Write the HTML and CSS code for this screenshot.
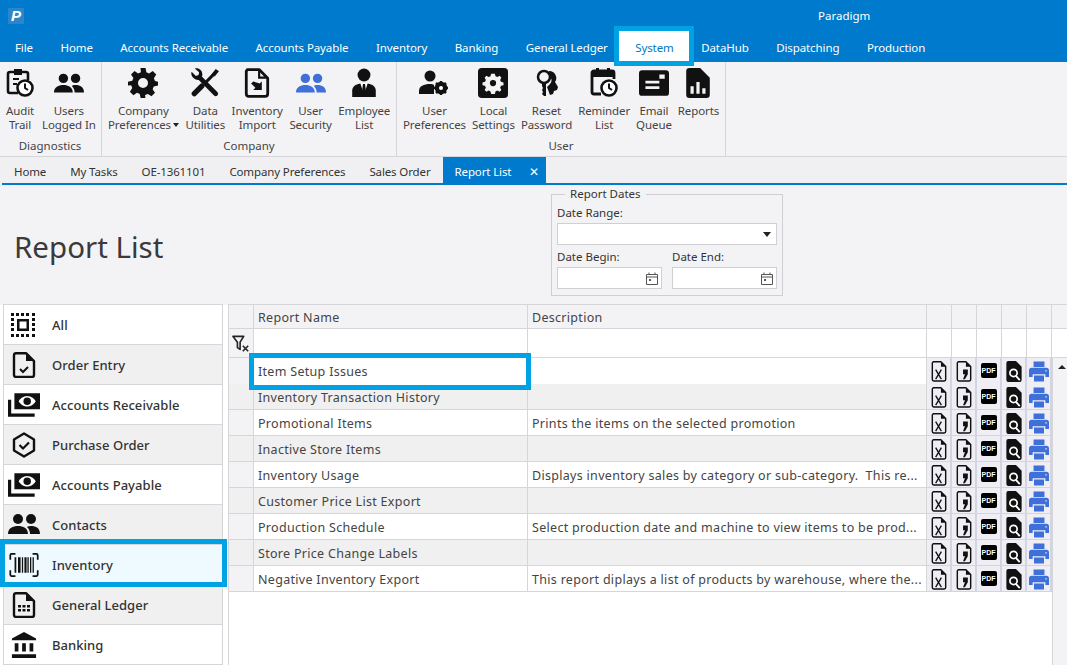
FILE: index.html
```html
<!DOCTYPE html>
<html lang="en">
<head>
    <meta charset="UTF-8">
    <title>Paradigm - Report List</title>
    <link rel="stylesheet" href="styles.css">
</head>
<body>
    <svg class="icon-defs">
        <symbol id="i-people" viewBox="0 0 32 24">
            <circle cx="10" cy="6" r="5"/><circle cx="23" cy="6" r="5"/>
            <path d="M0 21c0-6 5-8 10-8s10 2 10 8zM22 21c0-3-1-5-3-7 1-1 3-1 4-1 5 0 9 2 9 8z"/>
        </symbol>
        <symbol id="i-audit" viewBox="0 0 28 30">
            <path fill="none" stroke="currentColor" stroke-width="2.600" d="M12 25H4a2 2 0 0 1-2-2V6a2 2 0 0 1 2-2h16a2 2 0 0 1 2 2v6"/>
            <path d="M8 1h8v6H8zM7 10h6v2H7zM7 15h4v2H7z"/>
            <circle cx="19" cy="20" r="7.500" fill="#fff" stroke="currentColor" stroke-width="2.600"/>
            <path fill="none" stroke="currentColor" stroke-width="2" d="M19 15.500V20l3 2"/>
        </symbol>
        <symbol id="i-gear" viewBox="0 0 24 24">
            <path fill-rule="evenodd" d="M10 0h4l.7 3.400 2.200.9L19.800 2.400l2.800 2.800-1.900 2.900.9 2.200L24 11v3l-3.400.7-.9 2.200 1.900 2.900-2.800 2.800-2.900-1.900-2.200.9L13.900 24h-3.800l-.7-3.300-2.200-.9-2.900 1.900-2.800-2.800 1.900-2.900-.9-2.200L0 14v-3l3.400-.9.900-2.200-1.900-2.700 2.800-2.800 2.900 1.900 2.200-.9zM12 8a4 4 0 1 0 0 8 4 4 0 0 0 0-8z"/>
        </symbol>
        <symbol id="i-tools" viewBox="0 0 28 28">
            <path d="M1.500 3.500l4 4 2.500-1 .5-2.500-4-3.500C8-.5 12 2 11.500 7L9 11C5 12 0 8 1.500 3.500z"/>
            <path stroke="currentColor" stroke-width="4.400" stroke-linecap="round" d="M9 9l15 15"/>
            <path stroke="currentColor" stroke-width="2.800" d="M23 5L13 15"/>
            <path stroke="currentColor" stroke-width="5" stroke-linecap="round" d="M11 17l-7 7"/>
            <path d="M20 6l4-5 3 2-4 5z"/>
        </symbol>
        <symbol id="i-import" viewBox="0 0 24 28">
            <path fill="none" stroke="currentColor" stroke-width="2.600" stroke-linejoin="round" d="M3 1.500h11l8 8V24a2.500 2.500 0 0 1-2.500 2.500h-15A2.500 2.500 0 0 1 2 24V3z"/>
            <path fill="none" stroke="currentColor" stroke-width="2" d="M14 2v7h7"/>
            <path d="M8.500 12.500l-2 2 4 4-2 2h8v-8l-2 2z"/>
        </symbol>
        <symbol id="i-employee" viewBox="0 0 24 28">
            <circle cx="12" cy="6.500" r="6"/>
            <path d="M1 27v-6c0-4 4-6 8-6.500h6c4 .5 8 2.500 8 6.500v6z"/>
            <path fill="#fff" d="M8.500 14L12 25l3.500-11z"/>
            <path d="M11 15h2l1 8-2 3-2-3z"/>
        </symbol>
        <symbol id="i-user-pref" viewBox="0 0 30 26">
            <circle cx="11" cy="6" r="5.500"/>
            <path d="M0 24v-3c0-5 5-7 11-7 2 0 3 0 4 1v9z"/>
            <circle cx="22" cy="18" r="4.500" fill="none" stroke="currentColor" stroke-width="3.500"/>
            <path stroke="currentColor" stroke-width="2.500" d="M22 11v14M15 18h14M17 13l10 10M27 13L17 23"/>
            <circle cx="22" cy="18" r="2" fill="#fff"/>
        </symbol>
        <symbol id="i-local" viewBox="0 0 24 24">
            <path fill-rule="evenodd" d="M3 0h18a3 3 0 0 1 3 3v18a3 3 0 0 1-3 3H3a3 3 0 0 1-3-3V3a3 3 0 0 1 3-3zM10.500 4.500l-.5 2-1.500.7-1.800-1-1.400 1.500 1 1.800-.7 1.500-2 .5v2.200l2 .5.700 1.500-1 1.800 1.400 1.500 1.800-1 1.500.7.500 2h3l.5-2 1.500-.7 1.800 1 1.400-1.500-1-1.800.7-1.500 2-.5v-2.200l-2-.5-.7-1.500 1-1.800-1.400-1.500-1.800 1-1.500-.7-.5-2zM12 9.500a2.500 2.500 0 1 1 0 5 2.500 2.500 0 0 1 0-5z"/>
        </symbol>
        <symbol id="i-keys" viewBox="0 0 24 30">
            <circle cx="9" cy="9" r="6" fill="none" stroke="currentColor" stroke-width="2.500"/>
            <path d="M7 14h4v14H9l-2-2 1-2-1-2 1-2-1-2z"/>
            <path d="M14 3a7 7 0 0 1 6 11l3 5-1 3-3 1-1 3-3 1-3-8 3-3a5 5 0 0 0-1-8z"/>
        </symbol>
        <symbol id="i-reminder" viewBox="0 0 28 30">
            <path d="M6 0h3v4H6zM17 0h3v4h-3z"/>
            <path fill="none" stroke="currentColor" stroke-width="2.800" d="M11 26H4a2 2 0 0 1-2-2V5a2 2 0 0 1 2-2h18a2 2 0 0 1 2 2v6"/>
            <path d="M2 3h22v6H2z"/>
            <circle cx="19" cy="20" r="7.500" fill="#fff" stroke="currentColor" stroke-width="2.600"/>
            <path fill="none" stroke="currentColor" stroke-width="2" d="M19 15.500V20l3 2"/>
        </symbol>
        <symbol id="i-queue" viewBox="0 0 28 24">
            <path fill-rule="evenodd" d="M3 0h22a3 3 0 0 1 3 3v18a3 3 0 0 1-3 3H3a3 3 0 0 1-3-3V3a3 3 0 0 1 3-3zM19 4v4h5V4zM6 10v2.500h13V10zM6 15v2.500h13V15z"/>
        </symbol>
        <symbol id="i-reports" viewBox="0 0 22 28">
            <path fill-rule="evenodd" d="M3 0h10l9 9v16a3 3 0 0 1-3 3H3a3 3 0 0 1-3-3V3a3 3 0 0 1 3-3zM4 17v7h3v-7zM9.500 13v11h3V13zM15 19v5h3v-5z"/>
        </symbol>
        <symbol id="i-all" viewBox="0 0 24 24">
            <path fill-rule="evenodd" d="M6 6h12v12H6zM8.500 8.500v7h7v-7z"/>
            <path d="M0 0h3v3H0zM5 0h3v3H5zM10 0h3v3h-3zM15 0h3v3h-3zM21 0h3v3h-3zM0 5h3v3H0zM21 5h3v3h-3zM0 10h3v3H0zM21 10h3v3h-3zM0 15h3v3H0zM21 15h3v3h-3zM0 21h3v3H0zM5 21h3v3H5zM10 21h3v3h-3zM15 21h3v3h-3zM21 21h3v3h-3z"/>
        </symbol>
        <symbol id="i-order" viewBox="0 0 22 26">
            <path fill="none" stroke="currentColor" stroke-width="2.400" stroke-linejoin="round" d="M3 1.200h10l8 8V23a2 2 0 0 1-2 2H3a2 2 0 0 1-2-2V3a2 2 0 0 1 2-1.800z"/>
            <path d="M13 1v8h8z"/>
            <path fill="none" stroke="currentColor" stroke-width="2" d="M7 17l3 3 5-5"/>
        </symbol>
        <symbol id="i-money" viewBox="0 0 30 22">
            <path fill-rule="evenodd" d="M6 0h24v15H6zM18 2.500c-4 0-7 3-8 5 1 2 4 5 8 5s7-3 8-5c-1-2-4-5-8-5z"/>
            <circle cx="18" cy="7.500" r="3.500"/>
            <path d="M0 6h3v13h22v3H0z"/>
        </symbol>
        <symbol id="i-po" viewBox="0 0 24 26">
            <path fill="none" stroke="currentColor" stroke-width="2.400" stroke-linejoin="round" d="M12 1.500l10 6v11l-10 6-10-6v-11z"/>
            <path fill="none" stroke="currentColor" stroke-width="2.200" d="M7.500 13l3.500 3.500 6-6"/>
        </symbol>
        <symbol id="i-barcode" viewBox="0 0 34 28">
            <path fill="none" stroke="currentColor" stroke-width="2" d="M1 8V2.500A1.500 1.500 0 0 1 2.500 1H7M27 1h4.500A1.500 1.500 0 0 1 33 2.500V8M1 20v5.500A1.500 1.500 0 0 0 2.500 27H7M27 27h4.500a1.500 1.500 0 0 0 1.500-1.500V20"/>
            <path d="M6 5h2v18H6zM10 5h3v18h-3zM14.500 5h1.500v18h-1.500zM17.500 5h2.500v18h-2.500zM21 5h1.500v18H21zM24 5h1.500v18H24zM27 5h1.500v18H27z"/>
        </symbol>
        <symbol id="i-ledger" viewBox="0 0 22 26">
            <path fill="none" stroke="currentColor" stroke-width="2.400" stroke-linejoin="round" d="M3 1.200h10l8 8V23a2 2 0 0 1-2 2H3a2 2 0 0 1-2-2V3a2 2 0 0 1 2-1.800z"/>
            <path d="M13 1v8h8zM5 13h3v2.500H5zM9.500 13h3v2.500h-3zM14 13h3v2.500h-3zM5 17h3v2.500H5zM9.500 17h3v2.500h-3zM14 17h3v2.500h-3z"/>
        </symbol>
        <symbol id="i-bank" viewBox="0 0 26 28">
            <path d="M13 0l13 7v2H0V7zM3 12h4v9H3zM11 12h4v9h-4zM19 12h4v9h-4zM0 24h26v4H0z"/>
        </symbol>
        <symbol id="i-xls" viewBox="0 0 16 22">
            <path fill="none" stroke="currentColor" stroke-width="1.500" stroke-linejoin="round" d="M2 .8h8l5 5V19.500a1.500 1.500 0 0 1-1.500 1.500h-11A1.500 1.500 0 0 1 1 19.500V2z"/>
            <path d="M10 1v5h5z"/>
            <path stroke="currentColor" stroke-width="1.400" d="M4.500 9l6 10M10.500 9l-6 10"/>
        </symbol>
        <symbol id="i-word" viewBox="0 0 16 22">
            <path fill="none" stroke="currentColor" stroke-width="1.500" stroke-linejoin="round" d="M2 .8h8l5 5V19.500a1.500 1.500 0 0 1-1.500 1.500h-11A1.500 1.500 0 0 1 1 19.500V2z"/>
            <path d="M10 1v5h5zM7 9h5v5l-3 5H7l2-5H7z"/>
        </symbol>
        <symbol id="i-magnify" viewBox="0 0 16 22">
            <path d="M2 0h8l6 6v14a2 2 0 0 1-2 2H2a2 2 0 0 1-2-2V2a2 2 0 0 1 2-2z"/>
            <circle cx="7.500" cy="12.500" r="3.800" fill="none" stroke="#fff" stroke-width="1.800"/>
            <path stroke="#fff" stroke-width="2" d="M10 15.500l4 4.500"/>
        </symbol>
        <symbol id="i-print" viewBox="0 0 22 22">
            <path fill-rule="evenodd" d="M5 0h12v6H5zM3 7h16a3 3 0 0 1 3 3v7h-4v-3H4v3H0v-7a3 3 0 0 1 3-3zM5.500 15.500h11V22h-11zM18 9.500v1.500h1.500V9.500z"/>
        </symbol>
        <symbol id="i-calendar" viewBox="0 0 12 13">
            <path fill="none" stroke="currentColor" d="M.5 2.500h11v10H.5zM.5 5h11M3 .500v2M9 .500v2"/>
            <path d="M3 7h2v2H3z"/>
        </symbol>
        <symbol id="i-filter" viewBox="0 0 20 20">
            <path fill="none" stroke="currentColor" stroke-width="1.800" stroke-linejoin="round" d="M1 1.500h12L9 8v8l-3-2V8z"/>
            <path stroke="currentColor" stroke-width="1.800" d="M12 12l6 6M18 12l-6 6"/>
        </symbol>
    </svg>

    <header class="app-bar">
        <div class="title-bar">
            <span class="app-logo">P</span>
            <span class="app-name">Paradigm</span>
        </div>
        <nav class="menu">
            <a>File</a>
            <a>Home</a>
            <a>Accounts Receivable</a>
            <a>Accounts Payable</a>
            <a>Inventory</a>
            <a>Banking</a>
            <a>General Ledger</a>
            <a class="menu__active">System</a>
            <a>DataHub</a>
            <a>Dispatching</a>
            <a>Production</a>
        </nav>
    </header>

    <section class="ribbon">
        <div class="ribbon-group ribbon-group--diag">
            <div class="ribbon-group__items">
                <div class="ribbon-btn"><svg class="ribbon-icon"><use href="#i-audit"></use></svg><span>Audit<br>Trail</span></div>
                <div class="ribbon-btn"><svg class="ribbon-icon ribbon-icon--wide"><use href="#i-people"></use></svg><span>Users<br>Logged In</span></div>
            </div>
            <div class="ribbon-group__name">Diagnostics</div>
        </div>
        <div class="ribbon-group ribbon-group--company">
            <div class="ribbon-group__items">
                <div class="ribbon-btn"><svg class="ribbon-icon"><use href="#i-gear"></use></svg><span>Company<br>Preferences<i class="caret"></i></span></div>
                <div class="ribbon-btn"><svg class="ribbon-icon"><use href="#i-tools"></use></svg><span>Data<br>Utilities</span></div>
                <div class="ribbon-btn"><svg class="ribbon-icon"><use href="#i-import"></use></svg><span>Inventory<br>Import</span></div>
                <div class="ribbon-btn ribbon-btn--blue"><svg class="ribbon-icon ribbon-icon--wide"><use href="#i-people"></use></svg><span>User<br>Security</span></div>
                <div class="ribbon-btn"><svg class="ribbon-icon"><use href="#i-employee"></use></svg><span>Employee<br>List</span></div>
            </div>
            <div class="ribbon-group__name">Company</div>
        </div>
        <div class="ribbon-group ribbon-group--user">
            <div class="ribbon-group__items">
                <div class="ribbon-btn"><svg class="ribbon-icon"><use href="#i-user-pref"></use></svg><span>User<br>Preferences</span></div>
                <div class="ribbon-btn"><svg class="ribbon-icon"><use href="#i-local"></use></svg><span>Local<br>Settings</span></div>
                <div class="ribbon-btn"><svg class="ribbon-icon"><use href="#i-keys"></use></svg><span>Reset<br>Password</span></div>
                <div class="ribbon-btn"><svg class="ribbon-icon"><use href="#i-reminder"></use></svg><span>Reminder<br>List</span></div>
                <div class="ribbon-btn"><svg class="ribbon-icon"><use href="#i-queue"></use></svg><span>Email<br>Queue</span></div>
                <div class="ribbon-btn"><svg class="ribbon-icon"><use href="#i-reports"></use></svg><span>Reports</span></div>
            </div>
            <div class="ribbon-group__name">User</div>
        </div>
    </section>

    <nav class="doc-tabs">
        <a>Home</a>
        <a>My Tasks</a>
        <a>OE-1361101</a>
        <a>Company Preferences</a>
        <a>Sales Order</a>
        <a class="doc-tabs__active">Report List <span class="doc-tabs__close">✕</span></a>
    </nav>

    <section class="page-head">
        <h1 class="page-title">Report List</h1>
        <fieldset class="report-dates">
            <legend>Report Dates</legend>
            <label class="field-label">Date Range:</label>
            <div class="field-box field-box--select"><i class="caret caret--big"></i></div>
            <div class="date-row">
                <div class="date-field">
                    <label class="field-label">Date Begin:</label>
                    <div class="field-box"><svg class="cal-icon"><use href="#i-calendar"></use></svg></div>
                </div>
                <div class="date-field">
                    <label class="field-label">Date End:</label>
                    <div class="field-box"><svg class="cal-icon"><use href="#i-calendar"></use></svg></div>
                </div>
            </div>
        </fieldset>
    </section>

    <main class="content">
        <ul class="module-list">
            <li class="module"><svg class="module-icon module-icon--all"><use href="#i-all"></use></svg>All</li>
            <li class="module module--alt"><svg class="module-icon module-icon--doc"><use href="#i-order"></use></svg>Order Entry</li>
            <li class="module"><svg class="module-icon module-icon--money"><use href="#i-money"></use></svg>Accounts Receivable</li>
            <li class="module module--alt"><svg class="module-icon module-icon--po"><use href="#i-po"></use></svg>Purchase Order</li>
            <li class="module"><svg class="module-icon module-icon--money"><use href="#i-money"></use></svg>Accounts Payable</li>
            <li class="module module--alt"><svg class="module-icon module-icon--money"><use href="#i-people"></use></svg>Contacts</li>
            <li class="module module--active"><svg class="module-icon module-icon--money"><use href="#i-barcode"></use></svg>Inventory</li>
            <li class="module module--alt"><svg class="module-icon module-icon--doc"><use href="#i-ledger"></use></svg>General Ledger</li>
            <li class="module"><svg class="module-icon module-icon--po"><use href="#i-bank"></use></svg>Banking</li>
        </ul>

        <div class="report-grid">
            <div class="grid-row grid-row--head">
                <div class="cell"></div><div class="cell">Report Name</div><div class="cell">Description</div>
                <div class="cell"></div><div class="cell"></div><div class="cell"></div><div class="cell"></div><div class="cell"></div><div class="cell cell--end"></div>
            </div>
            <div class="grid-row grid-row--filter">
                <div class="cell cell--clear"><svg class="filter-icon"><use href="#i-filter"></use></svg></div><div class="cell"></div><div class="cell"></div>
                <div class="cell"></div><div class="cell"></div><div class="cell"></div><div class="cell"></div><div class="cell"></div><div class="cell cell--end"></div>
            </div>
            <div class="grid-row"><div class="cell cell--ind"></div><div class="cell cell--picked">Item Setup Issues</div><div class="cell"></div>
                <div class="cell cell--act"><svg><use href="#i-xls"></use></svg></div><div class="cell cell--act"><svg><use href="#i-word"></use></svg></div><div class="cell cell--act"><span class="pdf">PDF</span></div><div class="cell cell--act"><svg><use href="#i-magnify"></use></svg></div><div class="cell cell--act cell--print"><svg><use href="#i-print"></use></svg></div></div>
            <div class="grid-row grid-row--alt"><div class="cell cell--ind"></div><div class="cell">Inventory Transaction History</div><div class="cell"></div>
                <div class="cell cell--act"><svg><use href="#i-xls"></use></svg></div><div class="cell cell--act"><svg><use href="#i-word"></use></svg></div><div class="cell cell--act"><span class="pdf">PDF</span></div><div class="cell cell--act"><svg><use href="#i-magnify"></use></svg></div><div class="cell cell--act cell--print"><svg><use href="#i-print"></use></svg></div></div>
            <div class="grid-row"><div class="cell cell--ind"></div><div class="cell">Promotional Items</div><div class="cell">Prints the items on the selected promotion</div>
                <div class="cell cell--act"><svg><use href="#i-xls"></use></svg></div><div class="cell cell--act"><svg><use href="#i-word"></use></svg></div><div class="cell cell--act"><span class="pdf">PDF</span></div><div class="cell cell--act"><svg><use href="#i-magnify"></use></svg></div><div class="cell cell--act cell--print"><svg><use href="#i-print"></use></svg></div></div>
            <div class="grid-row grid-row--alt"><div class="cell cell--ind"></div><div class="cell">Inactive Store Items</div><div class="cell"></div>
                <div class="cell cell--act"><svg><use href="#i-xls"></use></svg></div><div class="cell cell--act"><svg><use href="#i-word"></use></svg></div><div class="cell cell--act"><span class="pdf">PDF</span></div><div class="cell cell--act"><svg><use href="#i-magnify"></use></svg></div><div class="cell cell--act cell--print"><svg><use href="#i-print"></use></svg></div></div>
            <div class="grid-row"><div class="cell cell--ind"></div><div class="cell">Inventory Usage</div><div class="cell">Displays inventory sales by category or sub-category.  This re...</div>
                <div class="cell cell--act"><svg><use href="#i-xls"></use></svg></div><div class="cell cell--act"><svg><use href="#i-word"></use></svg></div><div class="cell cell--act"><span class="pdf">PDF</span></div><div class="cell cell--act"><svg><use href="#i-magnify"></use></svg></div><div class="cell cell--act cell--print"><svg><use href="#i-print"></use></svg></div></div>
            <div class="grid-row grid-row--alt"><div class="cell cell--ind"></div><div class="cell">Customer Price List Export</div><div class="cell"></div>
                <div class="cell cell--act"><svg><use href="#i-xls"></use></svg></div><div class="cell cell--act"><svg><use href="#i-word"></use></svg></div><div class="cell cell--act"><span class="pdf">PDF</span></div><div class="cell cell--act"><svg><use href="#i-magnify"></use></svg></div><div class="cell cell--act cell--print"><svg><use href="#i-print"></use></svg></div></div>
            <div class="grid-row"><div class="cell cell--ind"></div><div class="cell">Production Schedule</div><div class="cell">Select production date and machine to view items to be prod...</div>
                <div class="cell cell--act"><svg><use href="#i-xls"></use></svg></div><div class="cell cell--act"><svg><use href="#i-word"></use></svg></div><div class="cell cell--act"><span class="pdf">PDF</span></div><div class="cell cell--act"><svg><use href="#i-magnify"></use></svg></div><div class="cell cell--act cell--print"><svg><use href="#i-print"></use></svg></div></div>
            <div class="grid-row grid-row--alt"><div class="cell cell--ind"></div><div class="cell">Store Price Change Labels</div><div class="cell"></div>
                <div class="cell cell--act"><svg><use href="#i-xls"></use></svg></div><div class="cell cell--act"><svg><use href="#i-word"></use></svg></div><div class="cell cell--act"><span class="pdf">PDF</span></div><div class="cell cell--act"><svg><use href="#i-magnify"></use></svg></div><div class="cell cell--act cell--print"><svg><use href="#i-print"></use></svg></div></div>
            <div class="grid-row"><div class="cell cell--ind"></div><div class="cell">Negative Inventory Export</div><div class="cell">This report diplays a list of products by warehouse, where the...</div>
                <div class="cell cell--act"><svg><use href="#i-xls"></use></svg></div><div class="cell cell--act"><svg><use href="#i-word"></use></svg></div><div class="cell cell--act"><span class="pdf">PDF</span></div><div class="cell cell--act"><svg><use href="#i-magnify"></use></svg></div><div class="cell cell--act cell--print"><svg><use href="#i-print"></use></svg></div></div>
            <div class="scroll-col"><i class="scroll-up"></i></div>
        </div>
    </main>
</body>
</html>
```

FILE: styles.css
```css
* {
    box-sizing: border-box;
}

html, body {
    height: 665px;
    overflow: hidden;
}

body {
    margin: 0;
    background: #f3f3f6;
    color: #333;
    font-family: "Noto Sans", Arial, sans-serif;
    font-size: 12px;
    position: relative;
}

.icon-defs {
    display: none;
}

/* top blue bar */
.app-bar {
    background: #007acc;
    color: #fff;
    height: 62px;
}

.title-bar {
    height: 32px;
    position: relative;
}

.app-logo {
    position: absolute;
    left: 8px;
    top: 8px;
    width: 16px;
    height: 16px;
    background: #2b86c9;
    font: italic bold 15px/16px "Liberation Sans", sans-serif;
    text-align: center;
}

.app-name {
    position: absolute;
    left: 818px;
    top: 8px;
    font-size: 11.500px;
}

.menu {
    display: flex;
    gap: 27.500px;
    padding-left: 15px;
    height: 30px;
    line-height: 31px;
    font-size: 11.500px;
    letter-spacing: -.1px;
    position: relative;
}

.menu__active {
    background: #fff;
    color: #0078c8;
    position: relative;
    z-index: 1;
}

.menu__active::before {
    content: "";
    position: absolute;
    left: -21px;
    right: -20px;
    top: -6px;
    bottom: -4px;
    border: 5px solid #00a2e4;
    background: #fff;
    z-index: -1;
}

/* ribbon */
.ribbon {
    display: flex;
    height: 95px;
    background: #f3f3f6;
    border-bottom: 1px solid #d6d6da;
}

.ribbon-group {
    display: flex;
    flex-direction: column;
    border-right: 1px solid #d6d6da;
    height: 94px;
}

.ribbon-group--diag {
    width: 102px;
    padding-left: 5px;
}

.ribbon-group--company {
    width: 295px;
    padding-left: 6px;
}

.ribbon-group--user {
    width: 329px;
    padding-left: 6px;
}

.ribbon-group__items {
    display: flex;
    gap: 6px;
    height: 76px;
}

.ribbon-group--company .ribbon-group__items {
    gap: 6.500px;
}

.ribbon-group--diag .ribbon-group__items {
    gap: 7px;
}

.ribbon-group__name {
    text-align: center;
    line-height: 16px;
    font-size: 11.500px;
    color: #444;
    margin-left: -6px;
}

.ribbon-btn {
    display: flex;
    flex-direction: column;
    align-items: center;
    text-align: center;
    font-size: 11.500px;
    line-height: 14px;
    letter-spacing: -.1px;
    padding-top: 6px;
    white-space: nowrap;
    color: #111;
}

.ribbon-btn span {
    color: #444;
}

.ribbon-btn--blue {
    color: #3f6fd8;
}

.ribbon-icon {
    width: 30px;
    height: 30px;
    margin-bottom: 6px;
    fill: currentColor;
}

.ribbon-icon--wide {
    padding-top: 2px;
}

.caret {
    display: inline-block;
    border: 3.500px solid transparent;
    border-top: 4px solid #222;
    border-bottom: 0;
    margin-left: 2px;
    vertical-align: 2px;
}

/* document tabs */
.doc-tabs {
    display: flex;
    height: 26px;
    padding-left: 2px;
    line-height: 30px;
    font-size: 11.500px;
    letter-spacing: -.13px;
    background: #f0f0f2;
}

.doc-tabs a {
    padding: 0 12px;
}

.doc-tabs .doc-tabs__active {
    background: #007acc;
    color: #fff;
    width: 103px;
    position: relative;
}

.doc-tabs__close {
    position: absolute;
    right: 7px;
    top: 0;
}

/* title and date box */
.page-head {
    height: 122px;
    border-top: 2px solid #007acc;
    margin-left: 2px;
    display: flex;
    align-items: flex-start;
}

.page-title {
    margin: 42px 0 0 12px;
    width: 537px;
    font-size: 29.500px;
    line-height: 40px;
    font-weight: 400;
    color: #3a3a3a;
}

.report-dates {
    width: 232px;
    height: 109px;
    margin: 2px 0 0 0;
    padding: 0 5px;
    border: 1px solid #cfcfd3;
    font-size: 11.500px;
    min-width: 0;
}

.report-dates legend {
    margin-left: 8px;
    padding: 0 5px;
    line-height: 14px;
}

.field-label {
    display: block;
    line-height: 15px;
    margin-top: 4px;
}

.field-box {
    height: 22px;
    background: #fff;
    border: 1px solid #d0d0d4;
    display: flex;
    align-items: center;
    justify-content: flex-end;
    padding-right: 3px;
}

.field-box--select {
    padding-right: 5px;
    margin-top: 3px;
}

.caret--big {
    border-width: 5px 4.500px 0;
    border-top-color: #222;
}

.date-row {
    display: flex;
    gap: 10px;
}

.date-field {
    flex: 1;
}

.date-field .field-box {
    margin-top: 3px;
}

.cal-icon {
    width: 12px;
    height: 13px;
    fill: #555;
    color: #555;
}

/* main area */
.content {
    display: flex;
    height: 361px;
    padding-left: 3px;
    background: #fff;
}

.module-list {
    list-style: none;
    margin: -1px 0 0;
    padding: 0;
    width: 220px;
    flex: none;
    border-top: 1px solid #d6d6da;
    border-left: 1px solid #d6d6da;
    border-right: 1px solid #d6d6da;
}

.module {
    height: 40px;
    display: flex;
    align-items: center;
    padding-left: 48px;
    position: relative;
    font-size: 13px;
    font-weight: 500;
    letter-spacing: .05px;
    color: #333;
    border-bottom: 1px solid #d6d6da;
}

.module--alt {
    background: #f0f0f0;
}

.module--active {
    background: #eefaff;
    z-index: 1;
}

.module--active::after {
    content: "";
    position: absolute;
    left: -4px;
    right: -5px;
    top: -6px;
    bottom: -3px;
    border: 5px solid #00a2e4;
}

.module-icon {
    position: absolute;
    fill: currentColor;
    color: #111;
    top: 50%;
}

.module-icon--all {
    left: 7px;
    width: 24px;
    height: 24px;
    margin-top: -12px;
}

.module-icon--doc {
    left: 8px;
    width: 24px;
    height: 26px;
    margin-top: -13px;
}

.module-icon--money {
    left: 4px;
    width: 32px;
    height: 24px;
    margin-top: -12px;
}

.module-icon--po {
    left: 7px;
    width: 26px;
    height: 26px;
    margin-top: -13px;
}

.report-grid {
    margin: -1px 0 0 5px;
    border-left: 1px solid #d6d6da;
    flex: 1;
    position: relative;
}

.grid-row {
    display: grid;
    grid-template-columns: 25px 274px 399px repeat(5, 25px);
    height: 26px;
    font-size: 12.500px;
    line-height: 27px;
    letter-spacing: .3px;
    color: #444;
}

.grid-row--head {
    grid-template-columns: 25px 274px 399px repeat(5, 25px) 1fr;
    height: 25px;
    border-top: 1px solid #d6d6da;
    background: #f3f3f6;
    line-height: 26px;
}

.grid-row--filter {
    grid-template-columns: 25px 274px 399px repeat(5, 25px) 1fr;
    height: 29px;
    background: #fff;
}

.grid-row--alt .cell:nth-child(-n+3) {
    background: #f0f0f0;
}

.cell {
    padding-left: 4px;
    border-right: 1px solid #d6d6da;
    border-bottom: 1px solid #d6d6da;
    white-space: pre;
    overflow: hidden;
}

.cell--end {
    border-right: 0;
}

.grid-row .cell--ind {
    background: #f3f3f6;
}

.cell--clear {
    background: #f3f3f6;
    padding: 6px 0 0 3px;
}

.filter-icon {
    width: 18px;
    height: 18px;
    color: #222;
}

.cell--act {
    padding: 3px 0 0;
    background: #eeeef4;
    display: flex;
    align-items: flex-start;
    justify-content: center;
    border-color: #d4d4e0;
    border-right-width: 2px;
}

.cell--act svg {
    width: 16px;
    height: 21px;
    fill: #111;
    color: #111;
}

.cell--print svg {
    width: 20px;
    fill: #3f6fd8;
    color: #3f6fd8;
}

.pdf {
    background: #000;
    color: #fff;
    width: 16px;
    height: 15px;
    margin-top: 2px;
    border-radius: 2px;
    font: bold 7px/15px "Liberation Sans", sans-serif;
    text-align: center;
    letter-spacing: 0;
}

.cell--picked {
    position: relative;
    overflow: visible;
    background: #fff;
}

.cell--picked::before {
    content: "";
    position: absolute;
    left: -5px;
    right: -4px;
    top: -5px;
    bottom: -5px;
    border: 5px solid #00a2e4;
}

.scroll-col {
    position: absolute;
    right: 0;
    top: 54px;
    bottom: 0;
    width: 15px;
    background: #f3f3f6;
    border-left: 1px solid #d6d6da;
}

.scroll-up {
    position: absolute;
    left: 5px;
    top: 7px;
    border: 4px solid transparent;
    border-bottom: 4px solid #222;
    border-top: 0;
}
```
